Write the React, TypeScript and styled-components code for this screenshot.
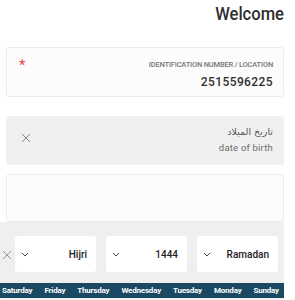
import React from 'react';
import styled, { createGlobalStyle } from 'styled-components';

const GlobalStyle = createGlobalStyle`
  html, body {
    margin: 0;
    padding: 0;
    background: #ffffff;
    font-family: Roboto, "DejaVu Sans", sans-serif;
  }
`;

const Page = styled.div`
  width: 295px;
  height: 300px;
  overflow: hidden;
  display: flex;
  flex-direction: column;
`;

const Title = styled.h1`
  margin: 0;
  padding: 3px 12px 0 0;
  height: 23px;
  text-align: right;
  font-size: 18px;
  font-weight: 500;
  letter-spacing: 0;
  color: #2e2e2e;
  transform: scaleX(0.92);
  transform-origin: right center;
`;

const Card = styled.div<{ $filled?: boolean; $h: number; $mt: number }>`
  box-sizing: border-box;
  width: 278px;
  height: ${(p) => p.$h}px;
  margin: ${(p) => p.$mt}px 0 0 6px;
  border-radius: 3px;
  border: 1px solid ${(p) => (p.$filled ? '#f0f0f0' : '#ececec')};
  background: ${(p) => (p.$filled ? '#f0f0f0' : '#fcfcfc')};
  display: flex;
  align-items: flex-start;
  justify-content: space-between;
  padding: 8px 10px 0 12px;
`;

const Star = styled.span`
  color: #e04a4a;
  font-size: 15px;
  line-height: 15px;
  margin-top: 2px;
`;

const FieldText = styled.div`
  display: flex;
  flex-direction: column;
  align-items: flex-end;
`;

const Label = styled.span`
  font-size: 7.5px;
  font-weight: 500;
  color: #777;
  letter-spacing: -0.2px;
  margin-top: 4px;
  text-transform: uppercase;
`;

const Value = styled.span`
  font-size: 12px;
  font-weight: 500;
  color: #2e2e2e;
  letter-spacing: 0.4px;
  margin-top: 6px;
`;

const ArabicLabel = styled.span`
  font-family: "DejaVu Sans", sans-serif;
  font-size: 9.5px;
  color: #555;
  direction: rtl;
  margin-top: 1px;
`;

const SubLabel = styled.span`
  font-size: 9.5px;
  color: #6e6e6e;
  letter-spacing: 0.2px;
  margin-top: 5px;
`;

const CloseIcon = ({ size = 10, color = '#8a8a8a' }: { size?: number; color?: string }) => (
  <svg width={size} height={size} viewBox="0 0 10 10">
    <path d="M1 1 L9 9 M9 1 L1 9" stroke={color} strokeWidth="1" fill="none" />
  </svg>
);

const Chevron = () => (
  <svg width="8" height="5" viewBox="0 0 8 5">
    <path d="M1 1 L4 4 L7 1" stroke="#444" strokeWidth="1" fill="none" />
  </svg>
);

const CloseWrap = styled.div`
  margin-top: 3px;
  margin-left: 2px;
`;

const Picker = styled.div`
  width: 284px;
  background: #efefef;
  display: flex;
  flex-direction: column;
`;

const SelectRow = styled.div`
  display: flex;
  align-items: center;
  padding: 14px 0 11px 0;
  gap: 10px;
`;

const RowClose = styled.div`
  width: 15px;
  display: flex;
  justify-content: flex-start;
  padding-left: 2px;
  margin-right: -12px;
  padding-top: 2px;
`;

const Select = styled.div`
  box-sizing: border-box;
  width: 81px;
  height: 36px;
  background: #ffffff;
  border-radius: 3px;
  display: flex;
  align-items: center;
  justify-content: space-between;
  padding: 0 9px 0 6px;
  font-size: 10px;
  font-weight: 500;
  color: #222;
`;

const DayBar = styled.div`
  height: 15px;
  background: #1b4862;
  display: flex;
  align-items: center;
  justify-content: space-between;
  padding: 0 5px 0 2px;
  box-shadow: 0 2px 3px rgba(0, 0, 0, 0.08);
`;

const Day = styled.span`
  color: #ffffff;
  font-size: 8px;
  font-weight: 700;
  letter-spacing: -0.2px;
`;

const days = ['Saturday', 'Friday', 'Thursday', 'Wednesday', 'Tuesday', 'Monday', 'Sunday'];

export default function App() {
  return (
    <Page>
      <GlobalStyle />
      <Title>Welcome</Title>
      <Card $h={50} $mt={21}>
        <Star>*</Star>
        <FieldText>
          <Label>Identification Number / Location</Label>
          <Value>2515596225</Value>
        </FieldText>
      </Card>
      <Card $filled $h={49} $mt={19}>
        <CloseWrap>
          <CloseIcon />
        </CloseWrap>
        <FieldText>
          <ArabicLabel>تاريخ الميلاد</ArabicLabel>
          <SubLabel>date of birth</SubLabel>
        </FieldText>
      </Card>
      <Card $h={48} $mt={9} />
      <Picker>
        <SelectRow>
          <RowClose>
            <CloseIcon size={10} color="#999" />
          </RowClose>
          <Select>
            <Chevron />
            <span>Hijri</span>
          </Select>
          <Select>
            <Chevron />
            <span>1444</span>
          </Select>
          <Select>
            <Chevron />
            <span>Ramadan</span>
          </Select>
        </SelectRow>
        <DayBar>
          {days.map((d) => (
            <Day key={d}>{d}</Day>
          ))}
        </DayBar>
      </Picker>
    </Page>
  );
}
